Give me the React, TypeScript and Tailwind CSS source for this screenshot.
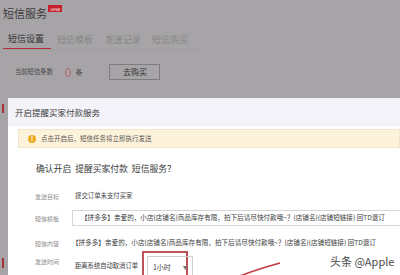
export default function App() {
  const tpl = '【拼多多】亲爱的，小店{店铺名}商品库存有限，拍下后请尽快付款哦~？{店铺名}{店铺短链接} 回TD退订';

  return (
    <div
      className="relative w-[400px] h-[275px] overflow-hidden bg-[#a6a4a6] text-[#3c3a3c]"
      style={{ fontFamily: '"Noto Sans CJK SC", "Noto Sans", sans-serif' }}
    >
      {/* dimmed page behind the dialog */}
      <div className="h-[98px] pl-[3px] pt-[5px]">
        <div className="flex items-start">
          <span className="text-[11px] leading-[15px] mt-[1px] text-[#3a383a]">短信服务</span>
          <span className="ml-[1px] bg-[#c41f2a] text-white text-[5px] leading-[7px] px-[2px] italic">new</span>
        </div>
        <div className="mt-[11px] flex items-end border-b border-[#9e9c9e] w-[200px]">
          <div className="w-[48px] pl-[5px] pb-[3px] border-b border-[#b3303a] text-[9px] leading-[13px] text-[#333133]">短信设置</div>
          <div className="ml-[6px] w-[48px] pb-[3px] text-[9px] leading-[13px] text-[#878587]">短信模板</div>
          <div className="w-[47px] pb-[3px] text-[9px] leading-[13px] text-[#878587]">发送记录</div>
          <div className="pb-[3px] text-[9px] leading-[13px] text-[#878587]">短信购买</div>
        </div>
        <div className="mt-[14px] flex items-center h-[16px]">
          <span className="ml-[12px] text-[6.3px] text-[#4a484a]">当前短信条数</span>
          <span className="ml-[12px] text-[12px] text-[#b06a72]">0</span>
          <span className="ml-[4px] text-[7px] text-[#4a484a]">条</span>
          <span className="ml-[27px] w-[51px] h-[16px] border border-[#7e7c7e] flex items-center justify-center text-[8px] text-[#333]">去购买</span>
        </div>
      </div>

      {/* dialog */}
      <div className="relative ml-[8px] h-[177px] bg-white">
        <div className="h-[28px] bg-[#f3f3f9] flex items-center pl-[7px] text-[8.5px] text-[#3b3b3b]">开启提醒买家付款服务</div>
        <div className="mt-[3px] ml-[10px] h-[19px] bg-[#fdf2dc] border border-[#f3e6c8] flex items-center pl-[9px]">
          <span className="w-[8px] h-[8px] rounded-full bg-[#e9a91e] text-white text-[6px] leading-[8px] text-center font-bold">!</span>
          <span className="ml-[5px] text-[6.5px] text-[#5a5650]">点击开启后，短信任务将立即执行发送</span>
        </div>
        <div className="mt-[15px] ml-[28px] text-[8.8px] leading-[12px] text-[#3a3a3a] whitespace-nowrap">确认开启&nbsp;&nbsp;提醒买家付款&nbsp;&nbsp;短信服务？</div>

        <div className="mt-[15px] flex items-center h-[12px]">
          <span className="ml-[27px] w-[40px] text-[6px] text-[#8d8d8d]">发送目标</span>
          <span className="text-[6.4px] text-[#444]">提交订单未支付买家</span>
        </div>
        <div className="mt-[8px] flex items-center h-[16px]">
          <span className="ml-[27px] w-[37px] text-[6px] text-[#8d8d8d]">短信模板</span>
          <div className="flex-1 min-w-0 h-[16px] border border-[#d5d5d5] border-r-0 flex items-center pl-[8px] text-[6.6px] text-[#3c3c3c] whitespace-nowrap overflow-hidden">{tpl}</div>
        </div>
        <div className="mt-[11px] flex items-center h-[12px]">
          <span className="ml-[27px] w-[37px] text-[6px] text-[#8d8d8d]">短信内容</span>
          <span className="text-[6.6px] text-[#3c3c3c] whitespace-nowrap">{tpl}</span>
        </div>
        <div className="mt-[2px] flex items-start">
          <span className="ml-[27px] mt-[6px] w-[40px] text-[6px] text-[#8d8d8d]">发送时间</span>
          <span className="mt-[10px] text-[6.3px] text-[#3c3c3c] whitespace-nowrap">距离系统自动取消订单</span>
          <div className="ml-[4px] w-[46px] h-[30px] border-2 border-[#c0505a] pt-[3px] pl-[3px]">
            <div className="w-[46px] h-[22px] border border-[#cfcfcf] flex items-center pl-[5px] text-[7px] text-[#444] whitespace-nowrap">
              1小时<span className="ml-[12px] text-[5px] text-[#777]">▼</span>
            </div>
          </div>
        </div>

        {/* annotation arrow and watermark */}
        <svg className="absolute left-[230px] top-[163px]" width="46" height="16" viewBox="0 0 46 16">
          <path d="M2 15 C12 11 24 7 42 2" stroke="#c23a44" strokeWidth="1.6" fill="none" />
        </svg>
        <div className="absolute left-[322px] top-[156px] text-[11px] leading-[14px] whitespace-nowrap text-[#4a4a4a] [text-shadow:0_0_2px_#fff]">头条 @Apple</div>
      </div>

      {/* edge marks left of the dialog */}
      <div className="absolute left-[2px] top-[104px] w-[2px] h-[9px] bg-[#a8323c]" />
      <div className="absolute left-[2px] top-[258px] w-[2px] h-[10px] bg-[#a8323c]" />
    </div>
  );
}
